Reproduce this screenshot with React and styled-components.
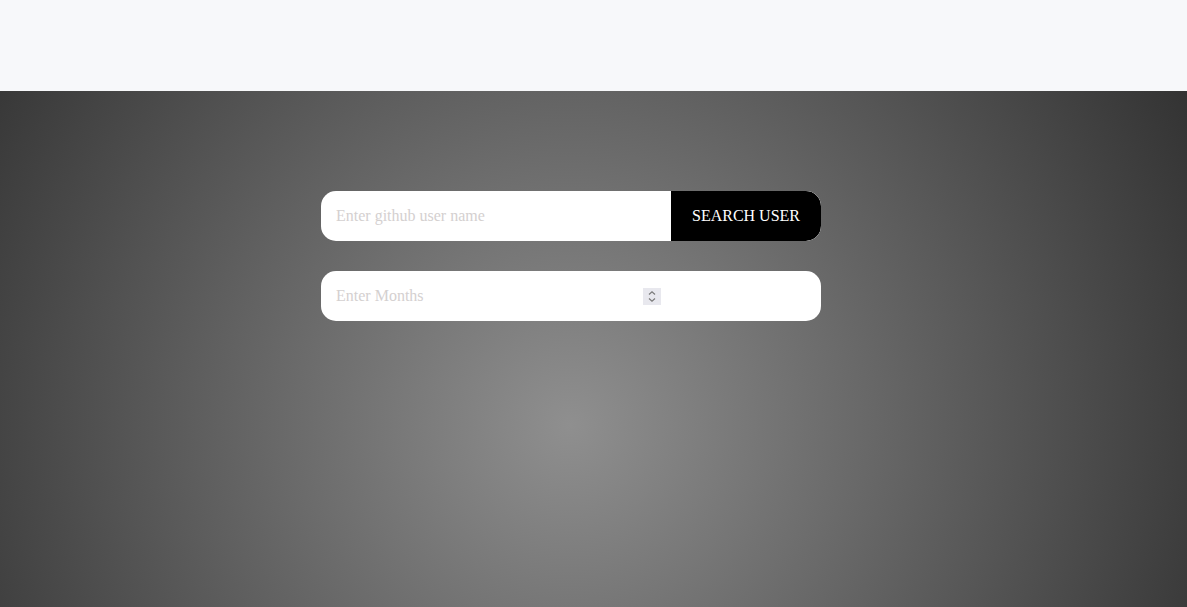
import React from 'react'
import styled, { createGlobalStyle } from 'styled-components'

const GlobalStyle = createGlobalStyle`
  html, body {
    margin: 0;
    padding: 0;
    overflow: hidden;
  }
  body {
    font-family: "Liberation Serif", "Times New Roman", serif;
    background: #f7f8fa;
  }
`

const Header = styled.header`
  height: 91px;
  background: #f7f8fa;
`

const Hero = styled.main`
  min-height: 516px;
  background: radial-gradient(circle farthest-corner at 570px 334px, #8f8f8f 0%, #333333 100%);
  display: flex;
  flex-direction: column;
  align-items: center;
  padding-top: 100px;
  padding-right: 45px;
  gap: 30px;
  box-sizing: border-box;
`

const Bar = styled.form`
  width: 500px;
  height: 50px;
  display: flex;
  align-items: center;
  background: #fff;
  border-radius: 15px;
  overflow: hidden;
`

const Field = styled.input`
  width: ${(p) => p.$width}px;
  height: 100%;
  border: none;
  outline: none;
  padding: 0 15px;
  box-sizing: border-box;
  font-family: "Liberation Serif", "Times New Roman", serif;
  font-size: 16px;
  color: #333;
  background: transparent;
  -moz-appearance: textfield;

  &::placeholder {
    color: #d4d0d0;
  }

  &::-webkit-inner-spin-button,
  &::-webkit-outer-spin-button {
    -webkit-appearance: none;
    margin: 0;
  }
`

const Spinner = styled.span`
  width: 18px;
  height: 17px;
  margin-top: 1px;
  background: #e8e8ee;
  display: flex;
  align-items: center;
  justify-content: center;
`

const SearchButton = styled.button`
  width: 150px;
  height: 100%;
  border: none;
  background: #000;
  color: #fff;
  font-family: "Liberation Serif", "Times New Roman", serif;
  font-size: 16px;
  border-radius: 0 15px 15px 0;
  cursor: pointer;
`

export default function App() {
  return (
    <>
      <GlobalStyle />
      <Header />
      <Hero>
        <Bar onSubmit={(e) => e.preventDefault()}>
          <Field $width={350} type="text" placeholder="Enter github user name" />
          <SearchButton type="submit">SEARCH USER</SearchButton>
        </Bar>
        <Bar onSubmit={(e) => e.preventDefault()}>
          <Field $width={322} type="number" placeholder="Enter Months" />
          <Spinner>
            <svg width="10" height="13" viewBox="0 0 10 13" fill="none" stroke="#7a7a7a" strokeWidth="1.2">
              <path d="M2 4.5 L5 1.8 L8 4.5" />
              <path d="M2 8.5 L5 11.2 L8 8.5" />
            </svg>
          </Spinner>
        </Bar>
      </Hero>
    </>
  )
}
